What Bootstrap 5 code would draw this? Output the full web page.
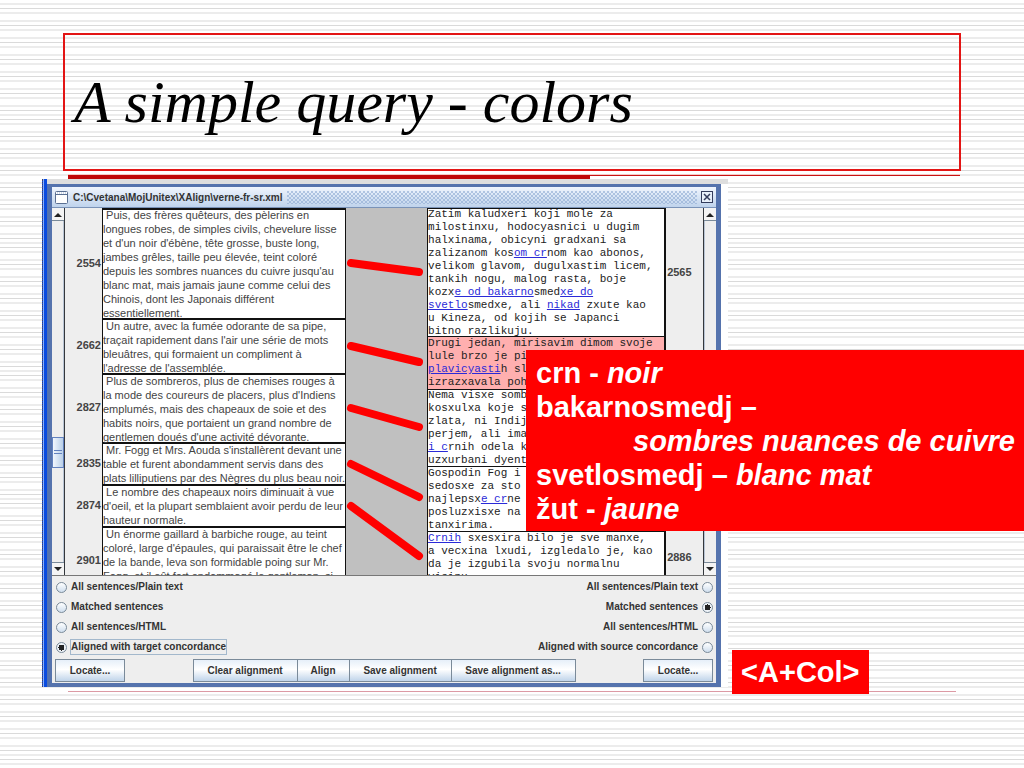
<!DOCTYPE html>
<html lang="en">
<head>
<meta charset="utf-8">
<meta name="viewport" content="width=device-width, initial-scale=1">
<title>A simple query - colors</title>
<link href="https://cdn.jsdelivr.net/npm/bootstrap@5.3.0/dist/css/bootstrap.min.css" rel="stylesheet">
<style>
  :root { --l: #ececec; --d: #dadada; }
  body {
    font-family: "Liberation Sans", Arial, sans-serif;
    color: #000;
    background-color: #fff;
    /* ruled paper: pairs of soft lines with a thin darker one between */
    background-image: linear-gradient(
      transparent 3px, var(--l) 3px 5px, transparent 5px 8px, var(--d) 8px 9px, transparent 9px 12px, var(--l) 12px 14px,
      transparent 14px 20px, var(--l) 20px 22px, transparent 22px 25px, var(--d) 25px 26px, transparent 26px 29px, var(--l) 29px 31px,
      transparent 31px 37px, var(--l) 37px 39px, transparent 39px 42px, var(--d) 42px 43px, transparent 43px 46px, var(--l) 46px 48px,
      transparent 48px 54px, var(--l) 54px 56px, transparent 56px 59px, var(--d) 59px 60px, transparent 60px 63px, var(--l) 63px 65px,
      transparent 65px 71px, var(--l) 71px 73px, transparent 73px 76px, var(--d) 76px 77px, transparent 77px 80px, var(--l) 80px 82px,
      transparent 82px 88px, var(--l) 88px 90px, transparent 90px 93px, var(--d) 93px 94px, transparent 94px 97px, var(--l) 97px 99px,
      transparent 99px 105px, var(--l) 105px 107px, transparent 107px 110px, var(--d) 110px 111px, transparent 111px 114px, var(--l) 114px 116px,
      transparent 116px 119px, var(--d) 119px 120px, transparent 120px 123px, var(--l) 123px 125px, transparent 125px 128px);
    background-size: 100% 128px;
  }
  .slide { min-height: 100vh; padding-top: 33px; overflow-x: hidden; }
  .title-box { margin: 0 63px 4px; padding: 0 9px; min-height: 138px; border: 2px solid #e31515; }
  .title-box h1 { font: italic 400 60px/64px "Liberation Serif", "Times New Roman", serif; }
  .rule-top { margin: 0 64px 0 68px; height: 4px; border-top: 1px solid #c81414; box-shadow: 0 -1px #f7c9c4; }
  .rule-top div { width: 58.5%; height: 4px; margin-top: -1px; background: #c00808; }
  .rule-bottom { margin: 4px 68px 0; height: 1px; background: #dc9aa4; }

  .shot { width: 67%; margin-left: 42px; padding: 5px 7px 0 0; background: linear-gradient(#dedede 5px, #fff 5px); }
  .edge { width: 5px; margin-top: -5px; border-left: 1px dotted #446; background: linear-gradient(90deg, #8fb2f3 0 1px, #0a4be0 1px); }
  .win { min-width: 0; border: solid #5573ad; border-width: 3px 5px 4px; background: #eee; }
  .win-title {
    height: 21px; padding: 0 3px 0 3px; border-bottom: 1px solid #7a93b8;
    background: linear-gradient(#f0f5fd, #bfd3ec);
    font-size: 10px; font-weight: 700; color: #333;
  }
  .grip {
    height: 13px; background-image: radial-gradient(circle at 1px 1px, #8eaad2 1px, transparent 1px), radial-gradient(circle at 1px 1px, #8eaad2 1px, transparent 1px);
    background-size: 4px 4px; background-position: 0 0, 2px 2px; opacity: .6;
  }
  .close-x { width: 12px; height: 12px; border: 0; padding: 0; background: none; line-height: 0; }

  .panes { height: 368px; overflow: hidden; border-bottom: 1px solid #777; }
  .track { flex: 0 0 13px; background: #eee; border-right: 1px solid #33373c; box-shadow: inset -1px 0 #b8c4d4; }
  .track.end { border-right: 0; border-left: 1px solid #33373c; box-shadow: inset 1px 0 #b8c4d4; }
  .track button { display: block; width: 100%; height: 13px; padding: 0; border: 0; border-bottom: 1px solid #7a8a99; background: #f4f4f4; line-height: 0; }
  .track button:last-child { border-top: 1px solid #7a8a99; border-bottom: 0; }
  .thumb-run { padding-bottom: 94px; }
  .thumb { height: 31px; border: 1px solid #6382bf; background: linear-gradient(90deg, #f2f7fd, #b9cfe8); }
  .pane { flex: 1 1 0; min-width: 0; overflow: hidden; }
  .pane.fr { flex-basis: 5px; }
  .pane table { width: 100%; border-collapse: separate; border-spacing: 0; table-layout: fixed; }
  .pane th { width: 37px; padding: 0 1px; font-size: 11px; line-height: 13px; color: #444; vertical-align: middle; }
  .pane td { padding: 0; border: solid #111; border-width: 2px 1px 0; background: #fff; vertical-align: middle; white-space: nowrap; }
  .pane td > div { margin: -2px 0; }
  .fr td { font-size: 11px; line-height: 14px; color: #444; }
  .sr td { font: 11px/13px "Liberation Mono", "Courier New", monospace; color: #222; border-width: 1px 2px 0 1px; }
  .sr td.hit { background: #ffafaf; }
  .sr td a { color: #2a2ad8; }
  .r110 { height: 110px } .r55 { height: 55px } .r69 { height: 69px } .r42 { height: 42px }
  .r128 { height: 128px } .r53 { height: 53px } .r77 { height: 77px } .r65 { height: 65px }
  .links { flex: 0 0 81px; background: #c0c0c0; }

  .opts { padding: 1px 3px 0 4px; font-size: 10px; font-weight: 700; color: #333; }
  .opt { height: 20px; gap: 4px; }
  .opt input {
    appearance: none; width: 11px; height: 11px; margin: 0; border: 1px solid #7a8a99; border-radius: 50%;
    background: linear-gradient(#fff, #cfdeee);
  }
  .opt input:checked { background: radial-gradient(circle, #222 0 3px, #eef3f8 3px); }
  .opt label { line-height: 14px; white-space: nowrap; }
  .opt .focused { outline: 1px solid #a3b8cc; }
  .bar { padding: 2px 3px 1px; }
  .swing {
    height: 23px; padding: 0; border: 1px solid #7a8a99; border-radius: 0; white-space: nowrap;
    background: linear-gradient(#e6eff9, #fff 45%, #c0d4ea); font-size: 10px; line-height: 20px; font-weight: 700; color: #333;
  }
  .swing + .swing { margin-left: -1px; }
  .w70 { width: 70px } .w105 { width: 105px } .w53 { width: 53px } .w103 { width: 103px } .w125 { width: 125px }

  .note { position: absolute; background: #f00; color: #fff; font-size: 29px; line-height: 34px; font-weight: 700; white-space: nowrap; }
  .glossary { top: 171px; right: 0; padding: 6px 9px 5px 10px; }
  .glossary .indent { padding-left: 97px; }
  .tag { top: 471px; left: calc(67% + 46px); padding: 5px 9px; }
</style>
</head>
<body>
<main class="slide">
  <header class="title-box d-flex align-items-center"><h1 class="m-0">A simple query - colors</h1></header>
  <div class="rule-top"><div></div></div>

  <section class="position-relative">
    <div class="shot d-flex">
      <div class="edge flex-shrink-0"></div>
      <div class="win flex-grow-1">
        <div class="win-title d-flex align-items-center">
          <svg class="flex-shrink-0" width="14" height="13" viewBox="0 0 14 13"><rect x=".5" y=".5" width="12" height="12" rx="1" fill="#fff" stroke="#5a6f92"/><path d="M1 3.500h11" stroke="#5a6f92"/><path d="M2 2h9" stroke="#9fb5d6" stroke-dasharray="1 1"/></svg>
          <span class="ms-1 me-1 text-nowrap">C:\Cvetana\MojUnitex\XAlign\verne-fr-sr.xml</span>
          <div class="grip flex-grow-1 me-1"></div>
          <button class="close-x" aria-label="Close"><svg width="12" height="12" viewBox="0 0 12 12"><rect x=".5" y=".5" width="11" height="11" fill="#e8f0fa" stroke="#333c5c"/><path d="M3 3l6 6M9 3l-6 6" stroke="#333c5c" stroke-width="1.500"/></svg></button>
        </div>

        <div class="panes d-flex">
          <div class="track d-flex flex-column justify-content-between">
            <button aria-label="Up"><svg width="8" height="5"><path d="M0 5l4-4 4 4z" fill="#222"/></svg></button>
            <div class="thumb-run flex-grow-1 d-flex flex-column justify-content-end"><div class="thumb d-flex align-items-center justify-content-center"><svg width="8" height="6"><path d="M0 .5h8M0 3.500h8" stroke="#6382bf"/></svg></div></div>
            <button aria-label="Down"><svg width="8" height="5"><path d="M0 0l4 4 4-4z" fill="#222"/></svg></button>
          </div>
          <div class="pane fr">
            <table>
              <tr class="r110"><th class="text-end">2554</th><td><div>&nbsp;Puis, des frères quêteurs, des pèlerins en<br>longues robes, de simples civils, chevelure lisse<br>et d'un noir d'ébène, tête grosse, buste long,<br>jambes grêles, taille peu élevée, teint coloré<br>depuis les sombres nuances du cuivre jusqu'au<br>blanc mat, mais jamais jaune comme celui des<br>Chinois, dont les Japonais différent<br>essentiellement.</div></td></tr>
              <tr class="r55"><th class="text-end">2662</th><td><div>&nbsp;Un autre, avec la fumée odorante de sa pipe,<br>traçait rapidement dans l'air une série de mots<br>bleuâtres, qui formaient un compliment à<br>l'adresse de l'assemblée.</div></td></tr>
              <tr class="r69"><th class="text-end">2827</th><td><div>&nbsp;Plus de sombreros, plus de chemises rouges à<br>la mode des coureurs de placers, plus d'Indiens<br>emplumés, mais des chapeaux de soie et des<br>habits noirs, que portaient un grand nombre de<br>gentlemen doués d'une activité dévorante.</div></td></tr>
              <tr class="r42"><th class="text-end">2835</th><td><div>&nbsp;Mr. Fogg et Mrs. Aouda s'installèrent devant une<br>table et furent abondamment servis dans des<br>plats lilliputiens par des Nègres du plus beau noir.</div></td></tr>
              <tr class="r42"><th class="text-end">2874</th><td><div>&nbsp;Le nombre des chapeaux noirs diminuait à vue<br>d'oeil, et la plupart semblaient avoir perdu de leur<br>hauteur normale.</div></td></tr>
              <tr class="r69"><th class="text-end">2901</th><td><div>&nbsp;Un énorme gaillard à barbiche rouge, au teint<br>coloré, large d'épaules, qui paraissait être le chef<br>de la bande, leva son formidable poing sur Mr.<br>Fogg, et il eût fort endommagé le gentleman, si<br>&nbsp;</div></td></tr>
            </table>
          </div>
          <div class="links">
            <svg width="81" height="366" viewBox="5 0 81 366" stroke="#f00" stroke-width="8" stroke-linecap="round"><path d="M10 55l68 9M10 138l68 16M10 200l68 19M10 256l68 33M10 298l68 50"/></svg>
          </div>
          <div class="pane sr">
            <table>
              <tr class="r128"><td><div>Zatim kaludxeri koji mole za<br>milostinxu, hodocyasnici u dugim<br>halxinama, obicyni gradxani sa<br>zalizanom kos<a href="#">om cr</a>nom kao abonos,<br>velikom glavom, dugulxastim licem,<br>tankih nogu, malog rasta, boje<br>kozx<a href="#">e od bakarno</a>smed<a href="#">xe do</a><br><a href="#">svetlo</a>smedxe, ali <a href="#">nikad</a> zxute kao<br>u Kineza, od kojih se Japanci<br>bitno razlikuju.</div></td><th>2565</th></tr>
              <tr class="r53"><td class="hit"><div>Drugi jedan, mirisavim dimom svoje<br>lule brzo je pi<br><a href="#">plavicyasti</a>h sl<br>izrazxavala poh</div></td><th></th></tr>
              <tr class="r77"><td><div>Nema visxe somb<br>kosxulxa koje s<br>zlata, ni Indij<br>perjem, ali ima<br><a href="#">i c</a>rnih odela k<br>uzxurbani dyent</div></td><th></th></tr>
              <tr class="r65"><td><div>Gospodin Fog i<br>sedosxe za sto<br>najlepsx<a href="#">e cr</a>ne<br>posluzxisxe na<br>tanxirima.</div></td><th></th></tr>
              <tr class="r53"><td><div><a href="#">Crnih</a> sxesxira bilo je sve manxe,<br>a vecxina lxudi, izgledalo je, kao<br>da je izgubila svoju normalnu<br>visinu.</div></td><th>2886</th></tr>
            </table>
          </div>
          <div class="track end d-flex flex-column justify-content-between">
            <button aria-label="Up"><svg width="8" height="5"><path d="M0 5l4-4 4 4z" fill="#222"/></svg></button>
            <button aria-label="Down"><svg width="8" height="5"><path d="M0 0l4 4 4-4z" fill="#222"/></svg></button>
          </div>
        </div>

        <form>
          <div class="opts d-flex justify-content-between">
            <div>
              <div class="opt d-flex align-items-center"><input type="radio" name="src" id="s1"><label for="s1">All sentences/Plain text</label></div>
              <div class="opt d-flex align-items-center"><input type="radio" name="src" id="s2"><label for="s2">Matched sentences</label></div>
              <div class="opt d-flex align-items-center"><input type="radio" name="src" id="s3"><label for="s3">All sentences/HTML</label></div>
              <div class="opt d-flex align-items-center"><input type="radio" name="src" id="s4" checked><label for="s4" class="focused">Aligned with target concordance</label></div>
            </div>
            <div>
              <div class="opt d-flex align-items-center justify-content-end"><label for="t1">All sentences/Plain text</label><input type="radio" name="tgt" id="t1"></div>
              <div class="opt d-flex align-items-center justify-content-end"><label for="t2">Matched sentences</label><input type="radio" name="tgt" id="t2" checked></div>
              <div class="opt d-flex align-items-center justify-content-end"><label for="t3">All sentences/HTML</label><input type="radio" name="tgt" id="t3"></div>
              <div class="opt d-flex align-items-center justify-content-end"><label for="t4">Aligned with source concordance</label><input type="radio" name="tgt" id="t4"></div>
            </div>
          </div>
          <div class="bar d-flex justify-content-between">
            <button type="button" class="swing w70">Locate...</button>
            <div class="d-flex">
              <button type="button" class="swing w105">Clear alignment</button>
              <button type="button" class="swing w53">Align</button>
              <button type="button" class="swing w103">Save alignment</button>
              <button type="button" class="swing w125">Save alignment as...</button>
            </div>
            <button type="button" class="swing w70">Locate...</button>
          </div>
        </form>
      </div>
    </div>

    <aside class="note glossary">
      <div>crn - <em>noir</em></div>
      <div>bakarnosmedj –</div>
      <div class="indent"><em>sombres nuances de cuivre</em></div>
      <div>svetlosmedj – <em>blanc mat</em></div>
      <div>žut - <em>jaune</em></div>
    </aside>
    <div class="note tag">&lt;A+Col&gt;</div>
    <div class="rule-bottom"></div>
  </section>
</main>
<script src="https://cdn.jsdelivr.net/npm/bootstrap@5.3.0/dist/js/bootstrap.bundle.min.js"></script>
</body>
</html>
